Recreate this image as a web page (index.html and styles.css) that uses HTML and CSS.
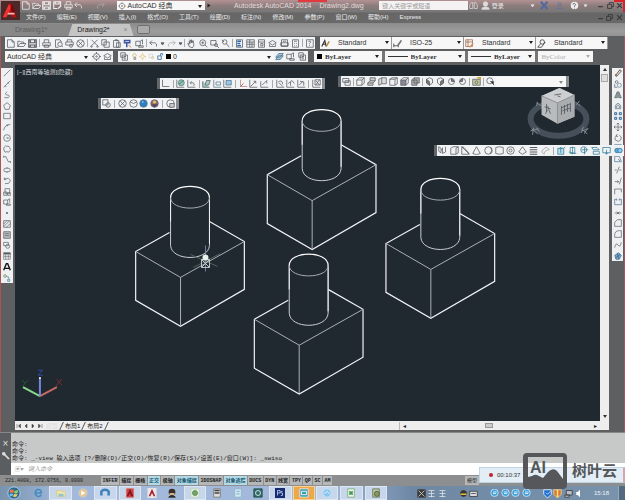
FILE: index.html
```html
<!DOCTYPE html>
<html lang="zh-CN">
<head>
<meta charset="utf-8">
<title>Autodesk AutoCAD 2014 - Drawing2.dwg</title>
<link rel="stylesheet" href="styles.css">
</head>
<body>
<header class="head">
  <button class="logo" aria-label="应用程序菜单"><svg viewBox="0 0 20 20"><path d="M2 17 9 2h3l5 15h-5l-1-4H8l-2 4z" fill="#b80f12"/><path d="M9 2 2 17h4l5-11z" fill="#ee3432"/><path d="m11 6 1 6h4L12 2z" fill="#780508"/><path d="M8 12h7v2H7z" fill="#f8bcb5"/></svg></button>
  <div class="headrows">
    <div class="titlebar">
      <div class="icons quick" data-icons="new open save saveas print undo - redo -"></div>
      <label class="field workspace"><svg viewBox="0 0 12 12" class="ic"><use href="#gear"/></svg><select aria-label="工作空间"><option>AutoCAD 经典</option></select></label>
      <span class="tri"></span>
      <h1>Autodesk AutoCAD 2014 <span>Drawing2.dwg</span></h1>
      <span class="redmark"></span>
      <span class="redcorner"></span>
      <input class="search" aria-label="搜索" placeholder="键入关键字或短语">
      <div class="icons account" data-icons="binoc user"></div>
      <a class="login" href="#">登录</a>
      <div class="icons service" data-icons="caret exchange cloud help caret"></div>
      <div class="icons win" data-icons="min restore close"></div>
    </div>
    <nav class="menu"><a href="#">文件(F)</a><a href="#">编辑(E)</a><a href="#">视图(V)</a><a href="#">插入(I)</a><a href="#">格式(O)</a><a href="#">工具(T)</a><a href="#">绘图(D)</a><a href="#">标注(N)</a><a href="#">修改(M)</a><a href="#">参数(P)</a><a href="#">窗口(W)</a><a href="#">帮助(H)</a><a href="#">Express</a>
      <div class="icons win dark" data-icons="min restore close"></div></nav>
  </div>
</header>
<div class="tabs"><a class="tab" href="#">Drawing1*</a><a class="tab on" href="#">Drawing2* <span>×</span></a><button class="add" aria-label="新建"></button></div>
<div class="row one">
  <div class="icons strip std" data-icons="new open save | print preview plot globe | cut copy paste match block | undo caret redo caret | hand zoom zoomw zoomp | props center tools sheet markup calc | help2"></div>
  <div class="strip styles">
    <label class="field"><svg viewBox="0 0 12 12" class="ic"><use href="#astyle"/></svg><select aria-label="文字样式"><option>Standard</option></select></label>
    <label class="field"><svg viewBox="0 0 12 12" class="ic"><use href="#dim"/></svg><select aria-label="标注样式"><option>ISO-25</option></select></label>
    <label class="field"><svg viewBox="0 0 12 12" class="ic"><use href="#tabstyle"/></svg><select aria-label="表格样式"><option>Standard</option></select></label>
    <label class="field"><svg viewBox="0 0 12 12" class="ic"><use href="#leader"/></svg><select aria-label="多重引线样式"><option>Standard</option></select></label>
  </div>
</div>
<div class="row two">
  <div class="strip wsbar"><label class="field"><select aria-label="工作空间选择"><option>AutoCAD 经典</option></select></label><div class="icons" data-icons="gear sheet"></div></div>
  <div class="strip layers"><div class="icons" data-icons="layers"></div><label class="field"><span class="icons tight" data-icons="bulb sun sun2 lock"></span><i class="swatch"></i><select aria-label="图层"><option>0</option></select></label><div class="icons" data-icons="iso block layers"></div></div>
  <div class="strip bylayer">
    <label class="field serif"><i class="swatch"></i><select aria-label="颜色"><option>ByLayer</option></select></label>
    <label class="field serif"><i class="line"></i><select aria-label="线型"><option>ByLayer</option></select></label>
    <label class="field serif third"><i class="line"></i><select aria-label="线宽"><option>ByLayer</option></select></label>
    <label class="field serif off"><select aria-label="打印样式" disabled><option>ByColor</option></select></label>
  </div>
</div>
<main class="work">
  <div class="icons side left" data-icons="line ray pline polygon rect arc circle revcloud spline ellipse earc insert block point hatch gradient region table letter addsel"></div>
  <section class="drawing">
    <div class="canvas">
      <svg class="model" viewBox="15 65 585 357" preserveAspectRatio="xMinYMin meet" role="img" aria-label="模型空间">
        <defs>
          <g id="solid" fill="none">
            <path d="M302 156 268 175v49l45 26 64-37v-48l-35-20" stroke="#f1f3f5" stroke-width="1.2"/>
            <path d="m268 175 45 26 64-36M313 201v48" stroke="#aab0b6"/>
            <path d="M303 121v48c1 16 38 16 39 0v-48" stroke="#c9ced3"/>
            <path d="M303 121v24M342 121v46" stroke="#eef0f2"/>
            <path d="M303 121c0 14 39 14 39 0" stroke="#a5abb1"/>
            <path d="M303 121c0-15 39-15 39 0" stroke="#fff" stroke-width="1.2"/>
          </g>
        </defs>
        <use href="#solid"/><use href="#solid" x="-132" y="77"/><use href="#solid" x="119" y="69"/><use href="#solid" x="-13" y="145"/>
        <g fill="none"><path d="m191 255 27 12M194 268l27-14" stroke="#4d665d"/><path d="M206 246v26" stroke="#7781a0"/><path d="M202 260h8v8h-8zl8 8m0-8-8 8" stroke="#c8cdd0"/></g><circle cx="206" cy="258" r="3" fill="#e8f2ec"/>
        <g fill="none" stroke-width="2"><path d="m23 388 17 9" stroke="#86d98a"/><path d="m40 397 17-9" stroke="#c86a62"/><path d="M40 397v-18" stroke="#7385dc"/></g>
        <g fill="none"><path d="m22 381 3 3 3-3m-3 3-2 3" stroke="#205a3a"/><path d="m57 380 5 6m0-6-6 7" stroke="#7c2b34"/><path d="M38 371h5l-5 5h5" stroke="#2c4ca0"/></g>
        <circle cx="40" cy="379" r="1" fill="#fff"/>
        <ellipse cx="560" cy="119" rx="28" ry="17" fill="none" stroke="#46505b" stroke-width="6"/>
        <g stroke="#838a92" fill="none"><path d="m532 131 8-2m-7 0 6 5m-4-6-1 7m4-7 3 4M583 129l6 5m-4-7-2 6m1-2 6-2m-1-1-3 6M538 103l5 3m-4-4-1 4M577 102l5 4m-1-5-3 4"/></g>
        <path d="m543 96 18-8 15 7v22l-17 7-16-9z" fill="#b9bcbe"/><path d="m543 96 18-8 15 7-17 8z" fill="#cccecf"/><path d="m559 103 17-8v22l-17 7z" fill="#a9adaf"/>
        <path d="m543 96 16 7v21m0-21 17-8" fill="none" stroke="#8d9193"/>
        <g stroke="#53585c" fill="none" stroke-width=".8"><path d="m556 95 7-1m-4 2 3 1M548 104v8m-2-5 6 2m-3-3 3 8m-5 0 2-4M563 106v9m3-10v9m3-10v8m3-9v9m-9-4 9-4m-8 7 8-3"/></g>
      </svg>
      <p class="vp">[−][西南等轴测][隐藏]</p>
      <div class="icons float ucs" data-icons="ucs | world undo2 | face object view | origin zaxis three | rotx roty rotz | apply"></div>
      <div class="icons float views" data-icons="named | top bottom leftv rightv front back | sw se ne nw | camera | find"><label class="field vsel"><select aria-label="视图"><option></option></select></label></div>
      <div class="icons float visual" data-icons="wire2 | globe wire ballb ballc | manage"></div>
      <div class="icons float modeling" data-icons="polysolid box wedge cone sphere cylinder torus pyramid helix plane | extrude revolve sweep loft press union"></div>
    </div>
    <div class="vscroll"><i class="up"></i><i class="thumb"></i><i class="down"></i></div>
    <div class="layout"><div class="icons nav" data-icons="first prev next last"></div><a class="modeltab" href="#">模型</a><i class="slash"></i><a href="#">布局1</a><i class="slash"></i><a href="#">布局2</a><i class="slash"></i><div class="hscroll"><i>◂</i><i class="thumb"></i><i>▸</i></div></div>
  </section>
  <div class="icons side right" data-icons="erase copy2 mirror offset array move rotate scale stretch trim extend breakpt break join chamfer fillet blend explode"></div>
</main>
<section class="command">
  <div class="grip"><span>×</span><svg viewBox="0 0 12 12" class="ic"><use href="#wrench"/></svg></div>
  <div class="log">
    <p>命令:</p><p>命令:</p><p>命令: _-view 输入选项 [?/删除(D)/正交(O)/恢复(R)/保存(S)/设置(E)/窗口(W)]: _swiso</p>
    <label class="prompt"><span>▣▾</span><input aria-label="命令行" placeholder="键入命令"></label>
  </div>
</section>
<footer class="status">
  <span class="coords">221.4808, 172.0756, 0.0000</span>
  <div class="modes"><button>INFER</button><button>捕捉</button><button>栅格</button><button class="on">正交</button><button>极轴</button><button class="on">对象捕捉</button><button>3DOSNAP</button><button class="on">对象追踪</button><button>DUCS</button><button>DYN</button><button>线宽</button><button>TPY</button><button>QP</button><button>SC</button><button>AM</button></div>
  <button class="modelbtn">模型</button>
</footer>
<div class="taskbar">
  <button class="start" aria-label="开始"><svg viewBox="0 0 16 16"><circle cx="8" cy="8" r="7" fill="#2d6996" stroke="#b7d3e5"/><path d="M3 5q3-2 5 0L7 8q-2-1-4 0z" fill="#ee7845"/><path d="M9 5q2 1 4-1l-1 4q-2 1-4 0z" fill="#9ed05d"/><path d="M3 9q2-1 4 0l-1 3q-1-1-3 0z" fill="#6cc3ed"/><path d="M8 9q2 1 4 0l-1 3q-2 1-4 0z" fill="#fbd253"/></svg></button>
  <div class="apps" data-icons="t-ie t-folder* t-media t-cloud* t-red* t-acad t-man t-green* t-doc t-note t-x t-ps* t-orange! t-blue* t-sheet* t-game*"></div>
  <div class="icons tray" data-icons="t-dark t-grey t-grey - t-yellow t-dark2 - t-chat t-chat t-chat t-chat - t-shield t-gold t-net t-sound"></div>
  <time>15:18</time><button class="desk" aria-label="显示桌面"></button>
</div>
<aside class="recorder"><i></i><span>00:10:37</span></aside>
<div class="mark"><svg viewBox="0 0 44 36"><path fill-rule="evenodd" d="M4 0h36q4 0 4 4v28q0 4-4 4H4q-4 0-4-4V4q0-4 4-4zM5 4v20l4-1q3-2 5-1l6 3 5-6q5-5 9-1l6 8V4z" fill="#55575a"/></svg><b>AI</b><strong>树叶云</strong></div>
<script src="app.js"></script>
</body>
</html>
```
FILE: app.js
```js
// Glyph bodies, drawn on a 12x12 grid with a 1-unit stroke.
const G = {
  new: '<path d="M2 1h6l3 3v7H2zM8 1v3h3"/>',
  open: '<path d="M1 10V3h3l1 1h4v2M1 10l3-4h8l-3 4z"/>',
  save: '<path d="M1 1h10v10H1zM3 1v4h6V1M3 11V8h6v3" stroke-width="1.6"/>',
  saveas: '<path d="M1 1h9v5M1 1v9h5M3 1v3h5V1m-1 9 4-4" stroke-width="1.5"/>',
  print: '<path d="M3 5V1h6v4M1 5h10v4H1zM3 8h6v3H3z"/>',
  preview: '<path d="M2 1h6l2 3M2 1v10h4"/><circle cx="8" cy="7" r="3"/><path d="m10 9 2 2"/>',
  plot: '<path d="M3 4V1h6v3M1 4h10v4H1z"/><circle cx="8" cy="9" r="2"/>',
  globe: '<circle cx="6" cy="6" r="5"/><path d="M3 3l6 6M9 3 3 9"/>',
  cut: '<path d="M2 1l8 8M10 1 2 9"/><circle cx="2" cy="10" r="1"/><circle cx="10" cy="10" r="1"/>',
  copy: '<path d="M1 1h6v7H1zM4 4h7v7H4z"/>',
  paste: '<path d="M2 2h7v9H2zM4 1h3v2M6 5h5v6H6z"/>',
  match: '<path d="M2 2h7v3H2zM5 5v6" stroke="#4056a0" stroke-width="2"/><path d="m7 8 4 3" stroke="#c97036"/>',
  block: '<path d="M1 3h6v6H1zM7 3l3-2v6M5 9h6v2H5z"/>',
  undo: '<path d="M4 2 1 5l3 3M1 5h7q3 1 2 5"/>',
  redo: '<path d="m8 2 3 3-3 3M11 5H4q-3 1-2 5" stroke="#aaa"/>',
  caret: '<path d="M4 5h4L6 8z" fill="currentColor"/>',
  hand: '<path d="m3 10-2-4 2 1V3l1 3V1l2 4V1l1 4 1-3 1 4v3l-2 3z"/>',
  zoom: '<circle cx="5" cy="5" r="4"/><path d="m8 8 3 3M3 5h4M5 3v4"/>',
  zoomw: '<path d="M1 2h7v6H1z"/><circle cx="8" cy="8" r="2"/><path d="m9 9 3 3"/>',
  zoomp: '<circle cx="5" cy="4" r="3"/><path d="m7 6 4 5M1 1l3 3"/>',
  props: '<path d="M2 1h8v10H2z"/><path d="M3 3h5M3 6h4M3 9h5" stroke="#3469b0" stroke-width="2"/>',
  center: '<path d="M1 1h10v10H1zM1 4h10M5 1v10M8 4v7M1 7h10"/>',
  tools: '<path d="M2 1h8v10H2zM2 4h8M5 6h3v3H5z"/>',
  sheet: '<path d="m1 5 5-3 5 3-5 3zM2 7v3h8V7"/>',
  markup: '<path d="M2 1h8v9H2zM1 5h10v4H1zM4 3h4"/>',
  calc: '<path d="M2 1h8v10H2zM4 3h4M4 6h1m2 0h1M4 9h1m2 0h1"/>',
  help2: '<path d="M2 1h9v10H2zM5 4q0-2 2-1 2 1-1 3v1m0 1v1"/>',
  help: '<circle cx="6" cy="6" r="5" fill="#eee" stroke="none"/><path d="M4 5q0-2 2-2 3 1 0 4v1m0 1v1" stroke="#444"/>',
  gear: '<circle cx="6" cy="6" r="4"/><circle cx="6" cy="6" r="1"/><path d="M6 0v2m0 8v2M0 6h2m8 0h2"/>',
  astyle: '<path d="m1 10 4-8 2 8M2 7h5" stroke-width="1.5"/><path d="m11 3-4 7" stroke="#b98538" stroke-width="2"/>',
  dim: '<path d="M1 9h6M1 6v5M7 6v5m0-3 4-6" /><path d="m11 2-4 6" stroke="#777" stroke-width="2"/>',
  tabstyle: '<path d="M1 1h9v9H1zM1 4h9M4 1v9" stroke="#9b6544"/><path d="m11 6-5 5" stroke="#d68f53" stroke-width="2"/>',
  leader: '<circle cx="7" cy="4" r="3"/><path d="m5 6-4 5h5l5-7"/>',
  layers: '<path d="M1 1h6v6H1zM3 4h7v7H3zM5 6h3M5 9h3"/>',
  bulb: '<circle cx="6" cy="4" r="3" stroke="#b9a54d"/><path d="M5 8h3v3H5z"/>',
  sun: '<circle cx="6" cy="6" r="3" stroke="#d0b24b"/><path d="M6 0v2m0 8v2M0 6h2m8 0h2" stroke="#d0b24b"/>',
  sun2: '<path d="M2 2h6v6H2z" stroke="#ccc"/><circle cx="8" cy="8" r="2" stroke="#ccba73"/>',
  lock: '<path d="M3 5h6v6H3zM8 5V1h3v3" stroke="#3b77a8" stroke-width="1.5"/>',
  iso: '<path d="m1 7 4-5h6L7 7zm0 3 4-5h6l-4 5z" stroke="#466f8b" fill="#afcbdc"/>',
  binoc: '<path d="M1 10V5l2-3h2v8zM7 10V2h2l2 3v5z"/>',
  user: '<circle cx="6" cy="4" r="3" fill="#ddd"/><path d="M1 11q0-3 5-3t5 3z" fill="#ddd"/>',
  exchange: '<path d="M1 1 10 11M10 1 1 11" stroke="#56699c" stroke-width="3"/>',
  cloud: '<circle cx="6" cy="4" r="2" stroke="#63719c"/><path d="M2 10 6 5l4 5z" stroke="#63719c"/>',
  min: '<path d="M2 8h8" stroke-width="2"/>',
  restore: '<path d="M1 4h7v7H1zM4 4V1h7v7H8" stroke-width="1.5"/>',
  close: '<path d="m2 2 8 8M10 2l-8 8" stroke-width="2"/>',
  first: '<path d="M2 2v8M9 2 5 6l4 4z" fill="currentColor"/>', prev: '<path d="M8 2 4 6l4 4z" fill="currentColor"/>',
  next: '<path d="m4 2 4 4-4 4z" fill="currentColor"/>', last: '<path d="M10 2v8M3 2l4 4-4 4z" fill="currentColor"/>',
  line: '<path d="M1 11 11 1"/>', ray: '<path d="M1 11 11 1M3 9l2 1M7 4l2 1"/>',
  pline: '<path d="M2 10h6q3-2 0-4H5q-3-2 1-5"/>',
  polygon: '<path d="m6 1 5 4-2 6H3L1 5z"/>', rect: '<path d="M1 2h10v8H1z"/>',
  arc: '<path d="M1 11Q2 3 11 2M5 3h2v2"/>',
  circle: '<circle cx="6" cy="6" r="5"/><path d="M6 6h3M6 5v2"/>',
  revcloud: '<path d="M2 3q2-3 4-1 4-1 4 2 3 3 0 5-1 3-4 1-4 2-4-1-2-3 0-6z"/>',
  spline: '<path d="M1 3q4-3 5 3t5 4M1 1v3m10 5v3"/>',
  ellipse: '<ellipse cx="6" cy="6" rx="5" ry="3"/><path d="M6 2v2m0 4v2"/>',
  earc: '<path d="M2 3q8-3 9 3-1 5-8 4M2 1v3h3"/>',
  insert: '<path d="M3 1h7v7H3zM1 6h5v5H1zM7 7h4v4H7z"/>',
  point: '<circle cx="6" cy="6" r="1" fill="currentColor"/>',
  hatch: '<path d="M1 1h10v10H1zM1 6l5-5M1 10l9-9M5 11l6-6"/>',
  gradient: '<path d="M1 1h10v10H1z" fill="#bbb"/><path d="M3 4h6M3 7h6"/>',
  region: '<path d="M1 2h7v5H1z"/><circle cx="7" cy="8" r="3"/>',
  table: '<path d="M1 1h10v10H1zM1 4h10M4 4v7M8 4v7M1 7h10" stroke-width=".8"/><path d="M1 2h10" stroke-width="2"/>',
  letter: '<path d="m1 11 4-10h2l4 10M3 8h6" stroke="#111" stroke-width="2"/>',
  addsel: '<circle cx="3" cy="3" r="2" stroke="#558446"/><path d="M5 4q4-1 4 3M7 8h3v3H7z" stroke="#397393"/>',
  erase: '<path d="M2 10 9 1l2 2-7 8zM2 8l2 2" stroke="#735a4b" stroke-width="1.5"/>',
  copy2: '<circle cx="4" cy="3" r="2"/><circle cx="8" cy="8" r="3" stroke="#54839a"/><path d="M1 6v5h4"/>',
  mirror: '<path d="M5 1v9H1zM7 1v9h4z" fill="#8aa"/>',
  offset: '<path d="M2 10V6q4-8 8 0v4zM4 9V6q2-3 4 0v3" stroke="#4b6677"/>',
  array: '<path d="M1 1h3v3H1zM8 1h3v3H8zM1 8h3v3H1zM8 8h3v3H8z" stroke="#386c9b" stroke-width="1.5"/>',
  move: '<path d="M6 0v12M0 6h12M4 2l2-2 2 2M4 10l2 2 2-2M2 4 0 6l2 2m8-4 2 2-2 2"/>',
  rotate: '<path d="M4 2q-4 3-2 7 5 4 8 0 3-5-2-7M5 0 3 3l3 1"/>',
  scale: '<path d="M1 1h10v10H1zM3 6h4v4H3zM6 5l4-3" stroke="#456f93"/>',
  stretch: '<path d="M1 2h7l3 8H1zM6 6l3 3" stroke="#456f93"/>',
  trim: '<path d="M1 6h3m4 0h3M4 11 8 1"/>', extend: '<path d="M1 7h6M8 11l3-10M5 5l2 2-2 2"/>',
  breakpt: '<path d="M1 11V3h10v5"/>', break: '<path d="M4 2H1v8h10V2H8M4 1v3M8 1v3" stroke="#476888"/>',
  join: '<path d="M1 6h10M4 4l2 2-2 2m4-4L6 6l2 2"/>',
  chamfer: '<path d="M1 11V5l4-4h6v10z"/>', fillet: '<path d="M1 11V8q0-7 7-7h3v10z"/>',
  blend: '<path d="M1 10q2-9 5-4t5-4"/>',
  explode: '<path d="m1 5 6-4 4 4-3 6H3z" fill="#7ba6c2" stroke="#396b91"/><path d="m2 9 7-5M5 2l2 8" stroke="#28577c"/>',
  ucs: '<path d="M2 1v9h9"/>', world: '<path d="M1 1v10h10"/><circle cx="7" cy="5" r="4" fill="#91c4b4" stroke="#4d7b73"/><path d="m4 7 6-5"/>',
  undo2: '<path d="M1 1v10h10M5 5h3q3 1 1 4M6 3 4 5l2 2"/>',
  face: '<path d="M1 3v8h9M4 8l2-6h5L9 8z" fill="#a9ccc4"/>', object: '<path d="M1 1v10h10M4 4h6v4H4z" stroke="#5f7b94"/>',
  view: '<path d="M1 1v10h10"/><path d="M4 2h7v6H4z" fill="#9ec6df" stroke="#477793"/>',
  origin: '<path d="M2 1v9h9" stroke="#c77"/><path d="M2 10 6 6"/>', zaxis: '<path d="M1 1v10h10M2 10l7-7M6 3h3v3"/>',
  three: '<path d="M1 3v8h10M3 8l6-6M9 2v4"/>', rotx: '<path d="M1 1v10h10M3 4q5-4 6 3M4 5l5 5"/>',
  roty: '<path d="M1 1v10h10M3 6l5-4 3 4M6 4v5"/>', rotz: '<path d="M1 1v10h10M4 3l5 1v5M3 8l5-5"/>',
  apply: '<path d="M1 1v10h10M4 1h7v7H4zM5 2l5 6M10 1 5 8"/>',
  named: '<path d="M1 2h8v5H1zM4 5h7v6H4zM6 7h3"/>',
  top: '<path d="M1 4h7v7H1zM1 4l3-3h7v7l-3 3M8 4l3-3"/>', bottom: '<path d="M1 8l3-3h7L8 8zM4 5V1h7v4M1 8v3h7V8" fill="#ccc"/>',
  leftv: '<path d="M1 3l4-2v8l-4 2zM5 1h6v8H5" fill="#ddd"/>', rightv: '<path d="M1 3h7v8H1zM8 3l3-2v8l-3 2M1 3l3-2h7"/>',
  front: '<path d="M1 4h7v7H1z" fill="#889"/><path d="m1 4 3-3h7v7l-3 3M8 4l3-3"/>', back: '<path d="M4 1h7v7H4zM1 4h7v7H1zM1 4l3-3" fill="#aaa"/>',
  sw: '<path d="M2 3l4-2 4 2v5l-4 3-4-3z"/><path d="m2 3 4 3v5L2 8z" fill="#777"/>', se: '<path d="M2 3l4-2 4 2v5l-4 3-4-3z"/><path d="M10 3 6 6v5l4-3z" fill="#777"/>',
  ne: '<circle cx="6" cy="6" r="4"/><path d="M6 6V2l4 4z" fill="#777"/>', nw: '<circle cx="6" cy="6" r="4"/><path d="M6 6V2L2 6z" fill="#777"/>',
  camera: '<path d="M1 3h10v8H1z" fill="#c5cea4"/><circle cx="6" cy="7" r="2"/><path d="M7 1h4v2" stroke="#cca42a" stroke-width="2"/>',
  find: '<circle cx="5" cy="5" r="4"/><path d="m6 6 5 5M6 6h4v4z" fill="#222"/>',
  wire2: '<path d="M1 1h7v7H1z"/><circle cx="8" cy="8" r="3"/>',
  wire: '<circle cx="6" cy="6" r="5"/><path d="M2 4q4 4 8 0"/>',
  ballb: '<circle cx="6" cy="6" r="5" fill="#2b7fc0" stroke="#55718b"/><circle cx="5" cy="4" r="1" fill="#cbe8fc" stroke="none"/>',
  ballc: '<circle cx="6" cy="6" r="5" fill="#8f7360" stroke="#65578c"/><path d="M2 7h8L6 11z" fill="#5d365d"/><circle cx="6" cy="4" r="2" fill="#edc467" stroke="none"/>',
  manage: '<circle cx="6" cy="6" r="5"/><path d="M5 6h6v5H5z" fill="#ccc"/>',
  polysolid: '<path d="M1 1v6l3 2V3zM6 2v8l4-2V1M4 5h2"/>', box: '<path d="M1 3l3-2h7v8l-3 2H1zM11 1 8 3v8"/>',
  wedge: '<path d="M1 1v10h10zM1 1l3 1 7 8"/>', cone: '<path d="m6 1 5 9q-5 3-10 0z"/>', sphere: '<circle cx="6" cy="6" r="5"/><path d="M9 2q3 5-1 8"/>',
  cylinder: '<path d="M1 2q5-2 10 0v8q-5 2-10 0z"/>', torus: '<circle cx="6" cy="6" r="5"/><circle cx="6" cy="6" r="2"/>',
  pyramid: '<path d="M6 1 1 8l5 3 5-3z"/>', helix: '<path d="M1 2h10M1 5h10M1 8h10M1 11h10" stroke-width="1.5"/>',
  plane: '<path d="M1 8q2-6 7-6l3 3q-6 0-7 6z" stroke="#999"/>',
  extrude: '<path d="M1 3h8v8H1zM5 9V2M3 4l2-2 2 2M9 3l2-2" stroke="#347d9a" fill="#b9dfe9"/>',
  revolve: '<path d="M3 2h6v8H3zM1 8l10 2M6 1v10" stroke="#347d9a"/>', sweep: '<circle cx="5" cy="5" r="4" stroke="#347d9a"/><path d="M2 5h9M6 2v9" stroke="#347d9a"/>',
  loft: '<path d="M1 2h7l3 3H3zM3 7h8v4H3z" stroke="#347d9a"/>', press: '<path d="M1 2h10v7H1zM6 5v6M4 9l2 2 2-2" stroke="#347d9a"/>',
  union: '<circle cx="4" cy="6" r="3" fill="#5da9d4" stroke="#27729f"/><circle cx="8" cy="6" r="3" fill="#8ac9e9" stroke="#27729f"/>',
  wrench: '<path d="M2 2v3l3 1 5 5 1-1-5-5-1-3H3" fill="#ddd" stroke="#ddd"/>',
  't-ie': '<path d="M10 8Q7 12 4 9 1 5 5 2q5-1 5 4H3" stroke="#438dbf" stroke-width="2"/>',
  't-folder': '<path d="M1 3h4l1 1h5v6H1z" fill="#f5e5a4" stroke="#d5cb8b"/><path d="M3 7h6v3H3z" fill="#8ec6cd" stroke="none"/>',
  't-media': '<circle cx="6" cy="6" r="5" fill="#e7c389" stroke="#c5ced6"/><path d="m4 3 5 3-5 3z" fill="#fff" stroke="none"/>',
  't-cloud': '<path d="M2 9q-2-7 4-7t4 7" stroke="#3c82ba" stroke-width="3"/>',
  't-red': '<path d="M1 0h10v12H1z" fill="#c9474c" stroke="#ddd"/><path d="M2 10 6 1l4 9H7L6 6l-2 4z" fill="#8d1119" stroke="none"/>',
  't-acad': '<path d="M1 0h10v12H1z" fill="#ece9ea" stroke="#ddd"/><path d="M2 10 6 1l4 9H8L6 6l-2 4z" fill="#a7212c" stroke="none"/>',
  't-man': '<circle cx="6" cy="5" r="4" fill="#372e28" stroke="none"/><path d="M3 6h6v3H3z" fill="#d7b084" stroke="none"/><path d="M2 11q4-4 8 0z" fill="#332"/>',
  't-green': '<path d="M1 1h10v10H1z" fill="#e5efe2" stroke="#bdd4b8"/><circle cx="6" cy="6" r="3" fill="#75a56b" stroke="#568a50"/>',
  't-doc': '<path d="M2 1h8v10H2z" fill="#ddd" stroke="#777"/><path d="M3 3h6M3 6h6" stroke="#444" stroke-width="2"/>',
  't-note': '<path d="M2 1h8v10H2z" fill="#cfe7ef" stroke="#8bb5ce"/><path d="M4 4h4M4 7h4" stroke="#73a5bf"/>',
  't-x': '<path d="M1 1h10v10H1z" fill="#306d67" stroke="#204c4d"/><circle cx="6" cy="6" r="3" stroke="#e8f0ec"/>',
  't-ps': '<path d="M0 0h12v12H0z" fill="#182d71" stroke="none"/><path d="M3 9V3h3v3H3m6-2H7v2h2v3H7" stroke="#b9ccf2"/>',
  't-orange': '<path d="M1 1h10v10H1z" fill="#3f9cb0" stroke="#eee"/><path d="M3 4h6v4H3z" stroke="#fff"/>',
  't-blue': '<circle cx="6" cy="6" r="5" fill="#8ac5ed" stroke="#c7ebff"/><path d="m3 7 3-3 3 3" stroke="#fff"/>',
  't-sheet': '<path d="M2 1h8v10H2z" fill="#eef8ed" stroke="#77a978"/><path d="m4 4 4 4m0-4L4 8" stroke="#469551" stroke-width="2"/>',
  't-game': '<path d="M2 1h8v10H2z" fill="#bac4a0" stroke="#657a58"/><circle cx="7" cy="7" r="3" fill="#8a9e4d" stroke="#555"/>',
  't-dark': '<path d="M1 1h10v10H1z" fill="#403c3d"/><path d="m2 2 8 8M10 2 2 10" stroke="#ddd"/>',
  't-grey': '<path d="M2 2h8M2 6h8M6 2v9M2 10h8" stroke="#e3e6e8"/>',
  't-yellow': '<circle cx="6" cy="6" r="4" fill="#3c3830"/><path d="M2 7h8" stroke="#e3bd43" stroke-width="2"/>',
  't-dark2': '<path d="M1 3h10v7H1z" fill="#ddd"/><path d="M3 6h6"/>',
  't-chat': '<circle cx="6" cy="5" r="5" fill="#46a3dc" stroke="#d7eefb"/><path d="M4 4h5M4 6h4" stroke="#fff"/>',
  't-shield': '<path d="M1 1h10v6l-5 5-5-5z" fill="#1e6dd0" stroke="#fff"/><path d="m4 5 2 2 4-4" stroke="#fff"/>',
  't-gold': '<path d="M1 1h10v6l-5 5-5-5z" fill="#d97837" stroke="#f2dc9e"/><path d="M6 1v10" stroke="#ffe277" stroke-width="2"/>',
  't-net': '<path d="M3 2h8v6H3zM1 8h6v3H1z" fill="#b7bdc4"/>',
  't-sound': '<path d="M3 4h2l3-3v10L5 8H3z" fill="#fff" stroke="none"/>'
};

const NS = 'http://www.w3.org/2000/svg';
const sprite = document.createElementNS(NS, 'svg');
sprite.setAttribute('class', 'sprite');
sprite.innerHTML = Object.entries(G)
  .map(([id, body]) => `<symbol id="${id}" viewBox="0 0 12 12">${body}</symbol>`).join('');
document.body.prepend(sprite);

document.querySelectorAll('[data-icons]').forEach(bar => {
  const html = bar.dataset.icons.split(' ').map(name => {
    if (name === '|') return '<i class="sep"></i>';
    if (name === '-') return '<i class="space"></i>';
    const id = name.replace(/[*!]$/, '');
    const state = name.endsWith('*') ? ' open' : name.endsWith('!') ? ' alert' : '';
    return `<button class="ib${id === 'caret' ? ' narrow' : ''}${state}" aria-label="${id.replace('t-', '')}"><svg class="ic" viewBox="0 0 12 12"><use href="#${id}"/></svg></button>`;
  }).join('');
  bar.insertAdjacentHTML('afterbegin', html);
});
```
FILE: styles.css
```css
* { box-sizing: border-box; margin: 0; padding: 0; }
body {
  min-height: 100vh; display: flex; flex-direction: column; position: relative;
  background: #5d5f60; color: #222;
  font: 6px/8px "Liberation Sans", "Noto Sans CJK SC", sans-serif;
  box-shadow: inset 1px 0 #a95459, inset -1px 0 #a95459; overflow-x: hidden;
}
button, input, select { font: inherit; color: inherit; border: 0; background: none; border-radius: 0; outline: 0; min-width: 0; }
a { color: inherit; text-decoration: none; white-space: nowrap; }
i { font-style: normal; }
.sprite { position: absolute; width: 0; height: 0; }
.ic { width: 9px; height: 9px; display: block; flex: none; fill: none; stroke: currentColor; }
.icons { display: flex; align-items: center; color: #555b60; }
.ib { flex: 1 1 0; display: flex; align-items: center; justify-content: center; height: 100%; }
.ib.narrow { flex-grow: .6; }
.sep { width: 1px; height: 8px; background: #aaa; margin: 0 2px; flex: none; }
.space { flex: 1; }

.head { display: flex; height: 23px; background: linear-gradient(#b39293, #8b7b7b 6px, #777 12px, #666 13px, #696969); }
.logo { width: 19px; margin: 1px 0 3px 1px; background: #4c2829; }
.logo svg { width: 18px; height: 18px; display: block; }
.headrows { flex: 1; min-width: 0; }
.titlebar { display: flex; align-items: center; height: 11px; color: #eee; }
.quick { width: 97px; height: 10px; color: #eee; }
.field { position: relative; display: flex; align-items: center; background: #f7f7f7; color: #333; min-width: 0; }
.field select { appearance: none; flex: 1; width: 100%; height: 100%; }
.field::after, .tri { content: ""; border: 2px solid transparent; border-top: 3px solid #222; border-bottom: 0; }
.field::after { position: absolute; right: 3px; top: 4px; pointer-events: none; }
.workspace { width: 88px; height: 9px; margin-left: 1px; gap: 1px; }
.workspace .ic { width: 8px; height: 8px; margin-left: 1px; color: #777; }
.workspace select { font-size: 7px; }
.titlebar .tri { margin-left: 2px; transform: rotate(-90deg); }
.titlebar h1 { font-size: 7px; font-weight: 400; margin-left: 23px; white-space: nowrap; width: 146px; color: #e2dcdc; }
.titlebar h1 span { margin-left: 6px; }
.redmark { position: absolute; left: 298px; top: 0; width: 29px; height: 2px; background: #e23a3e; }
.redcorner { position: absolute; right: 0; top: 0; width: 11px; height: 12px; border: solid #dd1f28; border-width: 2px 2px 0 0; }
.search { width: 89px; height: 9px; margin-left: auto; background: #f4f2f2; padding-left: 3px; }
.search::placeholder { color: #999; }
.account { width: 24px; height: 9px; color: #ddd; }
.login { width: 37px; }
.service { width: 62px; height: 10px; color: #ddd; }
.win { width: 28px; height: 10px; margin-left: 6px; color: #36393b; }
.titlebar .win { margin-right: 1px; }
.win .ic { width: 7px; height: 7px; }
.menu { display: flex; align-items: center; height: 12px; gap: 11px; padding-left: 6px; color: #eee; }
.menu .win { margin: 0 1px 0 auto; }

.tabs { display: flex; height: 13px; background: linear-gradient(#8b8b8b, #9c9c9c 8px, #939393); align-items: flex-end; font-size: 7px; }
.tab { height: 12px; line-height: 12px; padding: 0 26px 0 15px; color: #5c5c5c; background: #878787; }
.tab.on { background: #c5c5c5; color: #222; padding: 0 6px 0 9px; margin-left: -5px; clip-path: polygon(4px 0, calc(100% - 4px) 0, 100% 100%, 0 100%); }
.tab span { margin-left: 12px; color: #888; }
.add { width: 13px; height: 9px; margin: 0 0 2px 3px; background: #aaa; border: 1px solid #707070; border-radius: 2px; }

.row { display: flex; align-items: center; height: 14px; padding-left: 5px; }
.row.two { height: 13px; }
.strip { height: 11px; background: #f1f2f3; display: flex; align-items: center; }
.one .strip { height: 12px; }
.std { width: 310px; }
.std .ic { width: 9px; height: 9px; }
.std .sep { margin: 0 1px; }
.styles { margin-left: 5px; width: 288px; background: #e6e7e8; }
.styles .field { flex: 1; height: 12px; padding-left: 1px; gap: 8px; font-size: 7px; box-shadow: inset -1px 0 #999; }
.wsbar { width: 108px; }
.wsbar .field { width: 86px; height: 10px; padding-left: 2px; font-size: 7px; }
.wsbar .icons { flex: 1; }
.layers { margin-left: 5px; width: 190px; }
.layers > .icons:first-child { width: 12px; }
.layers .field { flex: 1; height: 10px; gap: 2px; font-size: 7px; }
.layers > .icons:last-child { width: 34px; }
.tight { width: 34px; }
.tight .ic { width: 7px; height: 7px; }
.swatch { width: 5px; height: 5px; background: #000; flex: none; }
.bylayer { margin-left: 6px; width: 279px; gap: 3px; background: #777; }
.bylayer .field { flex: 1 1 0; height: 11px; padding-left: 3px; gap: 3px; }
.bylayer .field:nth-child(2) { flex-grow: 1.2; }
.bylayer .off { flex-grow: .8; }
.serif { font-family: "Liberation Serif", serif; font-size: 7px; font-weight: 700; }
.field.off { color: #aaa; font-weight: 400; }
.off select { opacity: 1; }
.off::after { opacity: .35; }
.line { width: 20px; height: 1px; background: #333; flex: none; }

.work { flex: 1; display: flex; min-height: 357px; padding-top: 2px; }
.side { flex-direction: column; width: 12px; background: #eef0f1; margin-top: 3px; align-self: flex-start; }
.side .ib { width: 100%; }
.side .ic { width: 8px; height: 8px; }
.left { height: 215px; margin-left: 1px; }
.right { height: 193px; width: 11px; margin: 3px 2px 0 3px; }
.drawing { flex: 1; min-width: 0; margin-left: 2px; display: grid; grid-template: 1fr 9px / 1fr 9px; margin-bottom: 2px; }
.canvas { position: relative; background: #202830; min-width: 0; }
.model { position: absolute; width: 100%; height: 100%; }
.vp { position: absolute; left: 2px; top: 3px; color: #d8dbdd; }
.float { position: absolute; height: 11px; background: #f1f2f3; border-left: 3px solid #62676b; border-right: 3px solid #8a8e91; }
.float .ic { width: 9px; height: 9px; }
.ucs { left: 142px; top: 13px; width: 168px; }
.views { left: 323px; top: 11px; width: 231px; }
.views .ib { flex: 0 0 11px; }
.views .sep { margin: 0 1px; }
.vsel { flex: 1; height: 10px; }
.vsel::after { opacity: .5; }
.visual { left: 83px; top: 33px; width: 81px; }
.modeling { left: 419px; top: 80px; width: 190px; z-index: 2; border-right: 0; }
.vscroll { background: #eee; display: flex; flex-direction: column; align-items: center; padding: 3px 0; }
.up, .down { border: 2px solid transparent; border-bottom: 3px solid #333; border-top: 0; }
.down { border-bottom: 0; border-top: 3px solid #333; margin-top: auto; }
.vscroll .thumb { width: 7px; height: 8px; background: #ddd; border: 1px solid #aaa; margin-top: 3px; }
.layout { grid-column: 1 / 3; display: flex; align-items: center; background: #eee; gap: 3px; }
.nav { width: 28px; height: 8px; color: #444; }
.nav .ic { width: 6px; height: 6px; }
.slash { width: 1px; height: 8px; background: #555; transform: skewX(-25deg); }
.layout .modeltab { color: #ddd; }
.hscroll { width: 210px; margin-left: auto; padding: 0 12px 0 3px; display: flex; justify-content: space-between; align-items: center; border-left: 1px solid #bbb; }
.hscroll .thumb { width: 8px; height: 5px; background: #ccc; border: 1px solid #999; margin-right: 22px; }

.command { display: flex; background: #c7c8c8; border-top: 1px solid #888; }
.grip { width: 11px; background: #5b5e60; color: #ddd; padding: 7px 1px; font-size: 10px; display: flex; flex-direction: column; align-items: center; gap: 3px; }
.log { flex: 1; padding-top: 8px; font-family: "Liberation Mono", "Noto Sans CJK SC", monospace; }
.log p { padding-left: 1px; line-height: 7px; white-space: nowrap; }
.prompt { display: flex; align-items: center; height: 12px; background: #fff; color: #999; margin-top: 1px; padding-left: 3px; gap: 5px; font-family: "Liberation Sans", "Noto Sans CJK SC", sans-serif; font-style: italic; }
.prompt input { flex: 1; }
.prompt input::placeholder { color: #999; }

.status { height: 11px; display: flex; align-items: center; background: #8c8e8f; padding-left: 5px; font-size: 5px; font-family: "Liberation Mono", "Noto Sans CJK SC", monospace; }
.coords { width: 96px; white-space: nowrap; }
.modes { display: flex; width: 231px; gap: 1px; }
.modes button, .modelbtn { flex: 1 1 auto; height: 9px; background: #b5b7b8; color: #222; white-space: nowrap; }
.modes button { font-weight: 700; }
.modes .on { background: #b3dae5; color: #14536d; }
.modelbtn { flex: none; width: 14px; margin-left: 133px; }

.taskbar { height: 14px; display: flex; align-items: center; background: linear-gradient(90deg, #7893ae, #a2b9dc 10%, #a2b9dc 52%, #6e88a4 66%, #7a93ac); }
.start { width: 27px; height: 14px; display: flex; justify-content: center; align-items: center; }
.start svg { width: 14px; height: 14px; }
.apps { width: 360px; height: 14px; display: flex; margin-left: 1px; }
.apps .ic { width: 10px; height: 10px; }
.apps .open { background: #c7d6ea; border: 1px solid #dce7f3; margin: 0 1px; }
.apps .alert { background: #eda84c; border: 1px solid #f8d389; }
.tray { width: 168px; height: 12px; margin-left: auto; color: #333; }
time { color: #eef3f7; width: 24px; margin-left: 10px; font-size: 6px; }
.desk { width: 7px; height: 14px; background: #536b80; border-left: 1px solid #99abba; }

.recorder { position: absolute; right: 0; bottom: 17px; width: 146px; height: 16px; background: #e3edf5; border: 1px solid #c0d5e4; border-right: 2px solid #d9a5ab; display: flex; align-items: center; gap: 4px; padding-left: 9px; color: #333; }
.recorder i { width: 4px; height: 4px; border-radius: 50%; background: #c5222d; }
.mark { position: absolute; right: 8px; bottom: 11px; display: flex; align-items: center; gap: 5px; color: #55575a; }
.mark svg { width: 44px; height: 36px; }
.mark b { position: absolute; left: 7px; top: 7px; font-size: 16px; line-height: 16px; }
.mark strong { font-size: 15px; line-height: 20px; }
```
